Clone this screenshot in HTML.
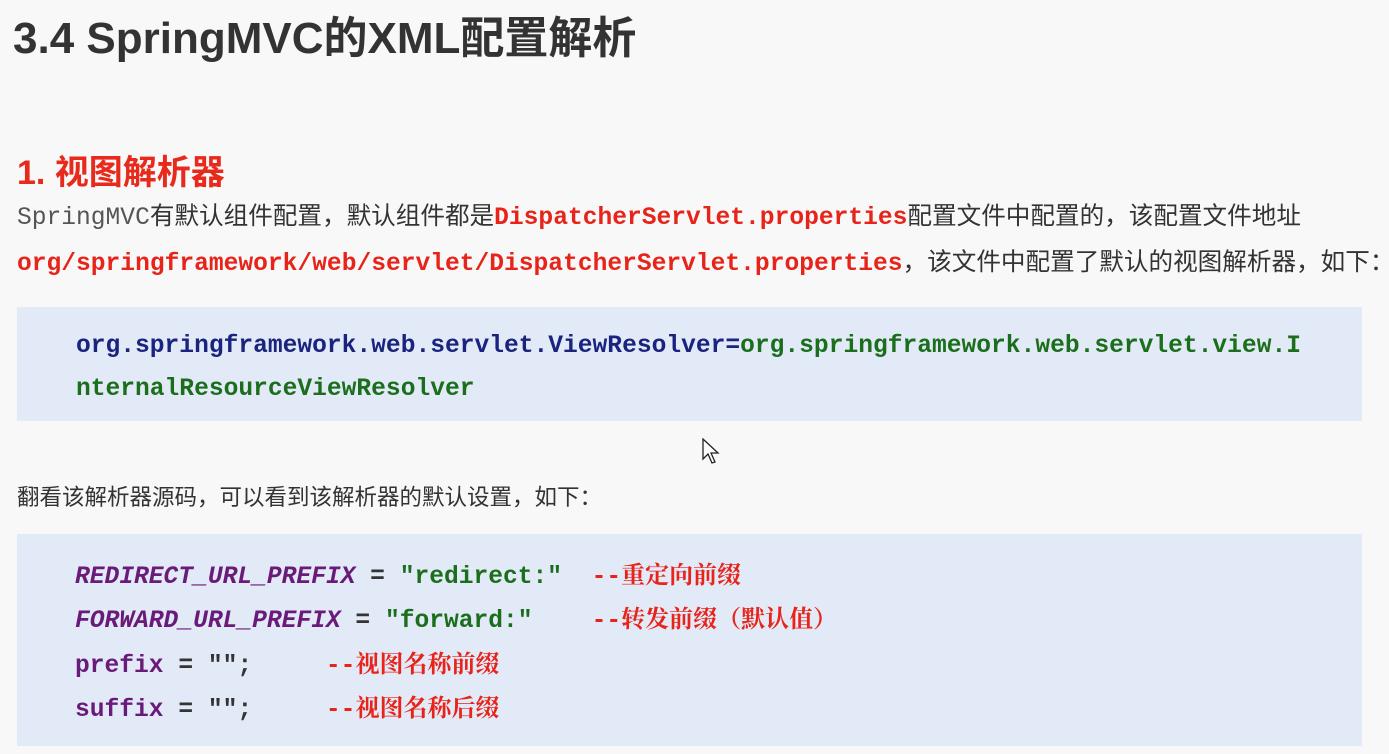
<!DOCTYPE html>
<html><head><meta charset="utf-8"><style>
body{margin:0;width:1389px;height:754px;background:#f7f8f7;position:relative;overflow:hidden;font-family:"Liberation Sans","Noto Sans CJK SC",sans-serif;}
.a{position:absolute;white-space:pre;}
.m{font-family:"Liberation Mono","Noto Sans CJK SC",monospace;font-size:24.6px;}
.b{font-weight:bold;}
.box{position:absolute;left:17px;width:1345px;background:#e2eaf7;}
.cn{font-family:"Liberation Sans","Noto Serif CJK SC",serif;font-weight:bold;color:#e8231a;font-size:24px;}
</style></head><body>
<div class="a b" style="left:13px;top:2px;font-size:44px;color:#333;">3.4 SpringMVC的XML配置解析</div>
<div class="a b" style="left:17px;top:145px;font-size:34px;color:#e82a1c;">1. 视图解析器</div>
<div class="a" style="left:17px;top:201px;font-size:24.6px;color:#333;line-height:32px;"><span class="m" style="color:#555;">SpringMVC</span>有默认组件配置，默认组件都是<span class="m b" style="color:#e8231a;">DispatcherServlet.properties</span>配置文件中配置的，该配置文件地址</div>
<div class="a" style="left:17px;top:247px;font-size:24.6px;color:#333;line-height:32px;"><span class="m b" style="color:#e8231a;">org/springframework/web/servlet/DispatcherServlet.properties</span>，该文件中配置了默认的视图解析器，如下：</div>
<div class="box" style="top:307px;height:114px;"></div>
<div class="a m b" style="left:76px;top:333px;color:#1a237e;">org.springframework.web.servlet.ViewResolver=<span style="color:#1b6e1b">org.springframework.web.servlet.view.I</span></div>
<div class="a m b" style="left:76px;top:376px;color:#1b6e1b;">nternalResourceViewResolver</div>
<div class="a" style="left:17px;top:480px;font-size:22.5px;color:#333;">翻看该解析器源码，可以看到该解析器的默认设置，如下：</div>
<div class="box" style="top:534px;height:212px;"></div>
<div class="a m b" style="left:75px;top:555px;color:#333;"><i style="color:#6a1b7a">REDIRECT_URL_PREFIX</i> = <span style="color:#1b6e1b">"redirect:"</span>  <span style="color:#e8231a">--</span><span class="cn">重定向前缀</span></div>
<div class="a m b" style="left:75px;top:599px;color:#333;"><i style="color:#6a1b7a">FORWARD_URL_PREFIX</i> = <span style="color:#1b6e1b">"forward:"</span>    <span style="color:#e8231a">--</span><span class="cn">转发前缀（默认值）</span></div>
<div class="a m b" style="left:75px;top:644px;color:#333;"><span style="color:#6a1b7a">prefix</span> = "";     <span style="color:#e8231a">--</span><span class="cn">视图名称前缀</span></div>
<div class="a m b" style="left:75px;top:688px;color:#333;"><span style="color:#6a1b7a">suffix</span> = "";     <span style="color:#e8231a">--</span><span class="cn">视图名称后缀</span></div>
<svg class="a" style="left:702px;top:438px" width="18" height="28" viewBox="0 0 18 28"><path d="M1 1 L1 21 L6 16 L10 25 L13 24 L9 15 L16 15 Z" fill="#fff" stroke="#222" stroke-width="1.3"/></svg>
</body></html>
